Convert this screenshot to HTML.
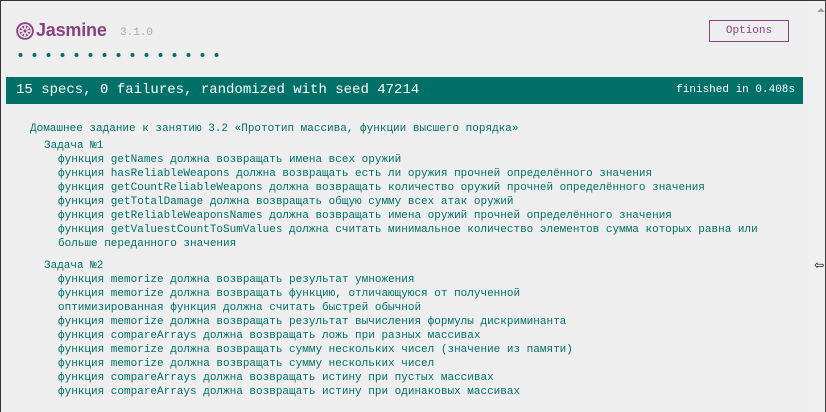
<!DOCTYPE html>
<html><head><meta charset="utf-8"><style>
html,body{margin:0;padding:0;}
body{width:826px;height:412px;background:#eee;position:relative;overflow:hidden;font-family:"Liberation Mono","DejaVu Sans Mono",monospace;}
.tb{position:absolute;left:0;top:0;width:826px;height:1px;background:#333;}
.lb{position:absolute;left:0;top:0;width:1px;height:412px;background:#333;}
.sb{position:absolute;left:808px;top:1px;width:17px;height:411px;background:#f0f0f0;}
.sbr{position:absolute;left:825px;top:0;width:1px;height:412px;background:#444;}
.logo{position:absolute;left:36px;top:20px;font:bold 18px "Liberation Sans",sans-serif;color:#8a4182;letter-spacing:-0.2px;}
.ver{position:absolute;left:120px;top:27px;font-size:11px;color:#aaa;}
.opt{position:absolute;left:709px;top:20px;width:78px;height:20px;border:1px solid #8a4182;color:#8a4182;font-size:11px;text-align:center;line-height:20px;}
.bar{position:absolute;left:6px;top:77px;width:797px;height:27px;background:#007069;color:#fff;font-size:14px;line-height:27px;}
.bar .l{position:absolute;left:10px;}
.bar .r{position:absolute;right:8px;font-size:11px;}
.t{position:absolute;font-size:11px;color:#007069;white-space:pre;line-height:14px;}
</style></head><body>
<div class="tb"></div><div class="lb"></div>
<div class="sb"></div><div class="sbr"></div>
<div style="position:absolute;left:817px;top:8px;width:0;height:0;border-left:4px solid transparent;border-right:4px solid transparent;border-bottom:4px solid #a0a0a0;"></div>
<svg style="position:absolute;left:16px;top:22px" width="18" height="18" viewBox="0 0 16 16"><circle cx="8" cy="8" r="7.8" fill="#8a4182"/><circle cx="8" cy="8" r="5.5" fill="none" stroke="#fff" stroke-width="1.2"/><g stroke="#fff" stroke-width="1.4"><line x1="8" y1="3.5" x2="8" y2="12.5"/><line x1="3.5" y1="8" x2="12.5" y2="8"/><line x1="4.8" y1="4.8" x2="11.2" y2="11.2"/><line x1="11.2" y1="4.8" x2="4.8" y2="11.2"/></g><circle cx="8" cy="8" r="1.4" fill="#8a4182"/></svg>
<div class="logo">Jasmine</div>
<div class="ver">3.1.0</div>
<div class="opt">Options</div>
<svg style="position:absolute;left:18px;top:52px" width="210" height="6"><g fill="#007069">
<circle cx="2.5" cy="3" r="2"/><circle cx="16.5" cy="3" r="2"/><circle cx="30.5" cy="3" r="2"/><circle cx="44.5" cy="3" r="2"/><circle cx="58.5" cy="3" r="2"/><circle cx="72.5" cy="3" r="2"/><circle cx="86.5" cy="3" r="2"/><circle cx="100.5" cy="3" r="2"/><circle cx="114.5" cy="3" r="2"/><circle cx="128.5" cy="3" r="2"/><circle cx="142.5" cy="3" r="2"/><circle cx="156.5" cy="3" r="2"/><circle cx="170.5" cy="3" r="2"/><circle cx="184.5" cy="3" r="2"/><circle cx="198.5" cy="3" r="2"/></g></svg>
<div class="bar"><span class="l">15 specs, 0 failures, randomized with seed 47214</span><span class="r">finished in 0.408s</span></div>
<div class="t" style="left:30px;top:122px">Домашнее задание к занятию 3.2 «Прототип массива, функции высшего порядка»</div>
<div class="t" style="left:44px;top:139px">Задача №1</div>
<div class="t" style="left:58px;top:153px">функция getNames должна возвращать имена всех оружий
функция hasReliableWeapons должна возвращать есть ли оружия прочней определённого значения
функция getCountReliableWeapons должна возвращать количество оружий прочней определённого значения
функция getTotalDamage должна возвращать общую сумму всех атак оружий
функция getReliableWeaponsNames должна возвращать имена оружий прочней определённого значения
функция getValuestCountToSumValues должна считать минимальное количество элементов сумма которых равна или
больше переданного значения</div>
<div class="t" style="left:44px;top:259px">Задача №2</div>
<div class="t" style="left:58px;top:273px">функция memorize должна возвращать результат умножения
функция memorize должна возвращать функцию, отличающуюся от полученной
оптимизированная функция должна считать быстрей обычной
функция memorize должна возвращать результат вычисления формулы дискриминанта
функция compareArrays должна возвращать ложь при разных массивах
функция memorize должна возвращать сумму нескольких чисел (значение из памяти)
функция memorize должна возвращать сумму нескольких чисел
функция compareArrays должна возвращать истину при пустых массивах
функция compareArrays должна возвращать истину при одинаковых массивах</div>
<div style="position:absolute;left:814px;top:258px;font-size:12px;color:#000;font-family:'DejaVu Sans',sans-serif">⇦</div>
</body></html>
